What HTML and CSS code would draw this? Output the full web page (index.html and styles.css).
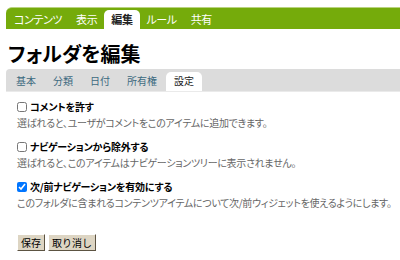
FILE: index.html
```html
<html>
  <head>
    <title>フォルダを編集</title>
    <link rel="stylesheet" href="styles.css">
  </head>
  <body>
    <ul class="views">
      <li>コンテンツ</li>
      <li>表示</li>
      <li class="selected">編集</li>
      <li>ルール</li>
      <li>共有</li>
    </ul>
    <h1>フォルダを編集</h1>
    <ul class="fieldsets">
      <li>基本</li>
      <li>分類</li>
      <li>日付</li>
      <li>所有権</li>
      <li class="selected">設定</li>
    </ul>
    <form class="settings">
      <div class="field">
        <label><input type="checkbox"> コメントを許す</label>
        <div class="help">選ばれると、ユーザがコメントをこのアイテムに追加できます。</div>
      </div>
      <div class="field">
        <label><input type="checkbox"> ナビゲーションから除外する</label>
        <div class="help">選ばれると、このアイテムはナビゲーションツリーに表示されません。</div>
      </div>
      <div class="field">
        <label><input type="checkbox" checked> 次/前ナビゲーションを有効にする</label>
        <div class="help">このフォルダに含まれるコンテンツアイテムについて次/前ウィジェットを使えるようにします。</div>
      </div>
      <div class="buttons">
        <input type="submit" value="保存">
        <input type="submit" value="取り消し">
      </div>
    </form>
  </body>
</html>
```

FILE: styles.css
```css
/* Plone-ish edit form */
body {
  margin: 0;
  font-family: "Noto Sans CJK JP", sans-serif;
  font-feature-settings: "palt";
  font-size: 10px;
  color: #000;
  background: #fff;
}

ul {
  list-style: none;
  margin: 0;
  padding: 0;
}

.views {
  display: flex;
  align-items: flex-end;
  margin: 7px 0 0 6px;
  height: 22px;
  padding-left: 1px;
  background-color: #75ab0b;
  border-top: 1px solid #b9d37f;
  border-radius: 6px 0 0 0;
  box-sizing: border-box;
  font-size: 11px;
}

.views li {
  color: #fff;
  padding: 0 7px;
  height: 19px;
  line-height: 18px;
  letter-spacing: -0.4px;
}

.views li.selected {
  background-color: #fff;
  color: #222;
  font-weight: bold;
  border-radius: 5px 5px 0 0;
}

h1 {
  margin: 11px 0 0 8px;
  font-size: 20px;
  line-height: 28px;
  font-weight: bold;
}

.fieldsets {
  display: flex;
  align-items: flex-end;
  margin: 1px 0 0 6px;
  height: 23px;
  padding-left: 2px;
  background-color: #dcdcdc;
  border-radius: 4px 0 0 0;
  border-bottom: 1px solid #eaeaea;
  box-sizing: border-box;
}

.fieldsets li {
  color: #3d6a7f;
  padding: 0 8px;
  height: 19px;
  line-height: 18px;
  margin-right: 1px;
}

.fieldsets li.selected {
  background-color: #fff;
  color: #222;
  border-radius: 5px 5px 0 0;
}

.settings {
  padding: 6px 0 0 17px;
}

.field {
  margin-bottom: 7px;
}

label {
  display: block;
  font-weight: bold;
  font-size: 10px;
  line-height: 17px;
  letter-spacing: -0.2px;
}

input[type="checkbox"] {
  margin: 0 1px 0 0;
  width: 10px;
  height: 10px;
  vertical-align: -1px;
}

.help {
  color: #666;
  line-height: 16px;
  letter-spacing: -0.3px;
  white-space: nowrap;
}

.buttons {
  margin-top: 23px;
  display: flex;
  gap: 3px;
}

input[type="submit"] {
  font-family: "Noto Sans CJK JP", sans-serif;
  font-size: 10px;
  padding: 0 3px;
  height: 17px;
  background-color: #ddd5c3;
  border: 1px solid #fff;
  border-right-color: #5c5342;
  border-bottom-color: #5c5342;
  color: #000;
  cursor: pointer;
}
```
